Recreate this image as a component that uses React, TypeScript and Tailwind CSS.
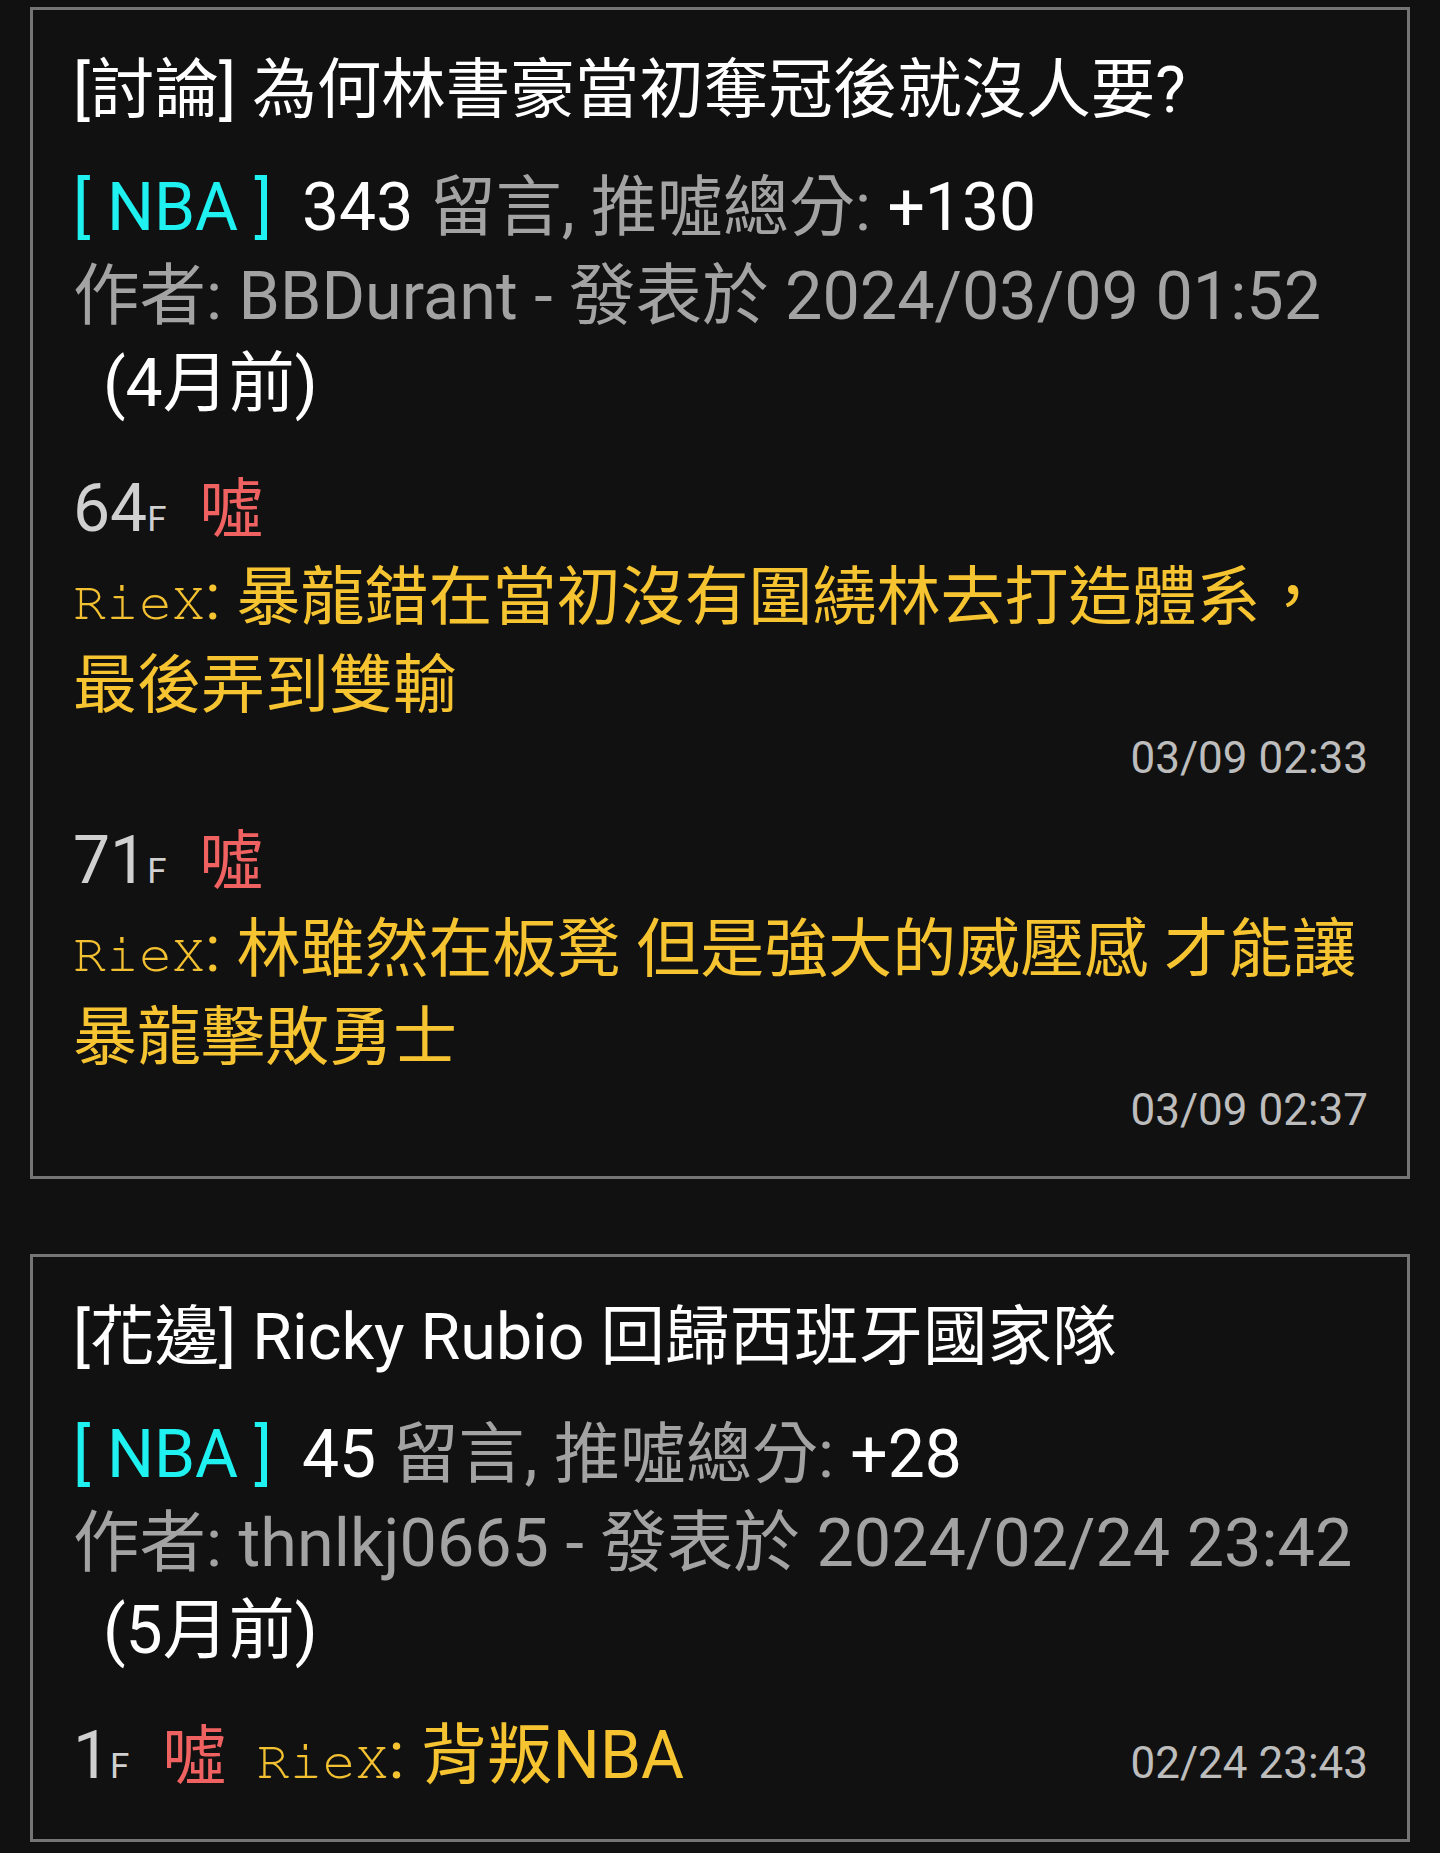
const sans = "font-['Roboto','Noto_Sans_CJK_TC',sans-serif]";
const mono =
  "font-['FreeMono','Nimbus_Mono_PS','Liberation_Mono','Noto_Sans_CJK_TC',monospace]";

type Comment = {
  floor: number;
  tag: string;
  user: string;
  text: string;
  time: string;
  inline?: boolean;
};

type Post = {
  title: string;
  board: string;
  count: number;
  score: string;
  author: string;
  date: string;
  ago: string;
  comments: Comment[];
};

const posts: Post[] = [
  {
    title: '[討論] 為何林書豪當初奪冠後就沒人要?',
    board: 'NBA',
    count: 343,
    score: '+130',
    author: 'BBDurant',
    date: '2024/03/09 01:52',
    ago: '(4月前)',
    comments: [
      {
        floor: 64,
        tag: '噓',
        user: 'RieX',
        text: '暴龍錯在當初沒有圍繞林去打造體系，最後弄到雙輸',
        time: '03/09 02:33',
      },
      {
        floor: 71,
        tag: '噓',
        user: 'RieX',
        text: '林雖然在板凳 但是強大的威壓感 才能讓暴龍擊敗勇士',
        time: '03/09 02:37',
      },
    ],
  },
  {
    title: '[花邊] Ricky Rubio 回歸西班牙國家隊',
    board: 'NBA',
    count: 45,
    score: '+28',
    author: 'thnlkj0665',
    date: '2024/02/24 23:42',
    ago: '(5月前)',
    comments: [
      {
        floor: 1,
        tag: '噓',
        user: 'RieX',
        text: '背叛NBA',
        time: '02/24 23:43',
        inline: true,
      },
    ],
  },
];

function Floor({ c }: { c: Comment }) {
  return (
    <>
      <span className="text-[66px] leading-[0] text-[#d0d0d0]">{c.floor}</span>
      <span className="text-[35px] leading-[0] text-[#d0d0d0]">F</span>
      <span className="ml-[33px] text-[64px] leading-[0] text-[#f06262]">
        {c.tag}
      </span>
    </>
  );
}

function Body({ c, size }: { c: Comment; size?: string }) {
  return (
    <>
      <span className={`${mono} text-[55px] leading-[0] text-[#f2c030]`}>
        {c.user}
      </span>
      <span className={`${size ?? 'text-[64px]'} leading-[0] text-[#f7c431]`}>
        : {c.text}
      </span>
    </>
  );
}

function CommentRow({ c }: { c: Comment }) {
  if (c.inline) {
    return (
      <div className="flex items-baseline justify-between pt-[6px]">
        <div className="text-[64px] leading-[76px]">
          <Floor c={c} />
          <span className="ml-[30px] leading-[0]">
            <Body c={c} size="text-[66px]" />
          </span>
        </div>
        <span className="text-[44px] leading-[76px] text-[#bdbdbd]">
          {c.time}
        </span>
      </div>
    );
  }

  return (
    <div className="flex flex-col">
      <div className="text-[64px] leading-[88px]">
        <Floor c={c} />
      </div>
      <div className="text-[64px] leading-[88px]">
        <Body c={c} />
      </div>
      <div className="text-right text-[44px] leading-[56px] text-[#bdbdbd]">
        {c.time}
      </div>
    </div>
  );
}

function PostCard({ post }: { post: Post }) {
  return (
    <div className="border-[3px] border-[#757575] pt-[36px] pr-[39px] pb-[38px] pl-[40px]">
      <div className="text-[64.5px] leading-[88px] text-white">{post.title}</div>
      <div className="mt-[30px] text-[66px] leading-[88px] text-[#a3a3a3]">
        <span className="text-[#1ff0f0]">[ {post.board} ]</span>
        <span className="ml-[30px] text-white">{post.count}</span> 留言,
        推噓總分: <span className="text-white">{post.score}</span>
      </div>
      <div className="text-[66.5px] leading-[88px] text-[#a3a3a3]">
        作者: {post.author} - 發表於 {post.date}
      </div>
      <div className="pl-[30px] text-[66px] leading-[88px] text-white">
        {post.ago}
      </div>
      <div className="mt-[38px] flex flex-col gap-[32px]">
        {post.comments.map((c) => (
          <CommentRow key={c.floor} c={c} />
        ))}
      </div>
    </div>
  );
}

export default function App() {
  return (
    <div
      className={`${sans} flex min-h-screen flex-col gap-[75px] bg-[#111111] px-[30px] pt-[7px] pb-[13px]`}
    >
      {posts.map((post) => (
        <PostCard key={post.title} post={post} />
      ))}
    </div>
  );
}
